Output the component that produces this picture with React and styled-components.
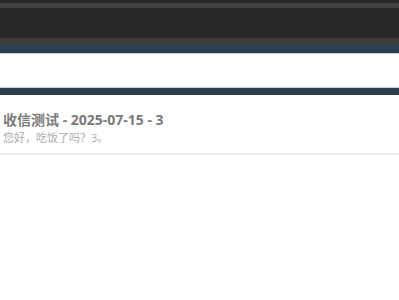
import React from "react";
import styled, { createGlobalStyle } from "styled-components";

const Global = createGlobalStyle`
  html, body { margin: 0; padding: 0; background: #ffffff; }
  body { font-family: "Open Sans", "Noto Sans CJK SC", sans-serif; }
`;

const Page = styled.div`
  width: 399px;
  height: 300px;
  display: flex;
  flex-direction: column;
  overflow: hidden;
  background: #fff;
`;

const Band = styled.div`
  height: ${(p) => p.h}px;
  background: ${(p) => p.bg};
  flex: none;
`;

const WhiteStrip = styled.div`
  height: 33px;
  background: #fff;
  border-top: 1px solid #c9d0d8;
  border-bottom: 1px solid #c9d0d8;
  flex: none;
`;

const Item = styled.div`
  padding: 16px 3px 8px;
  border-bottom: 2px solid #ededed;
  display: flex;
  flex-direction: column;
  gap: 3px;
`;

const Title = styled.div`
  font-size: 14px;
  font-weight: 700;
  color: #7a7a7a;
  line-height: 17px;
  white-space: nowrap;
`;

const Sub = styled.div`
  font-size: 11px;
  color: #acacac;
  line-height: 14px;
  white-space: nowrap;
`;

export default function App() {
  return (
    <Page>
      <Global />
      <Band h={3} bg="#2a2a2a" />
      <Band h={5} bg="#424242" />
      <Band h={30} bg="#282828" />
      <Band h={7} bg="#3d3d3d" />
      <Band h={8} bg="#2d3e50" />
      <WhiteStrip />
      <Band h={7} bg="#2d3e50" />
      <Item>
        <Title>收信测试 - 2025-07-15 - 3</Title>
        <Sub>您好，吃饭了吗？3。</Sub>
      </Item>
    </Page>
  );
}
